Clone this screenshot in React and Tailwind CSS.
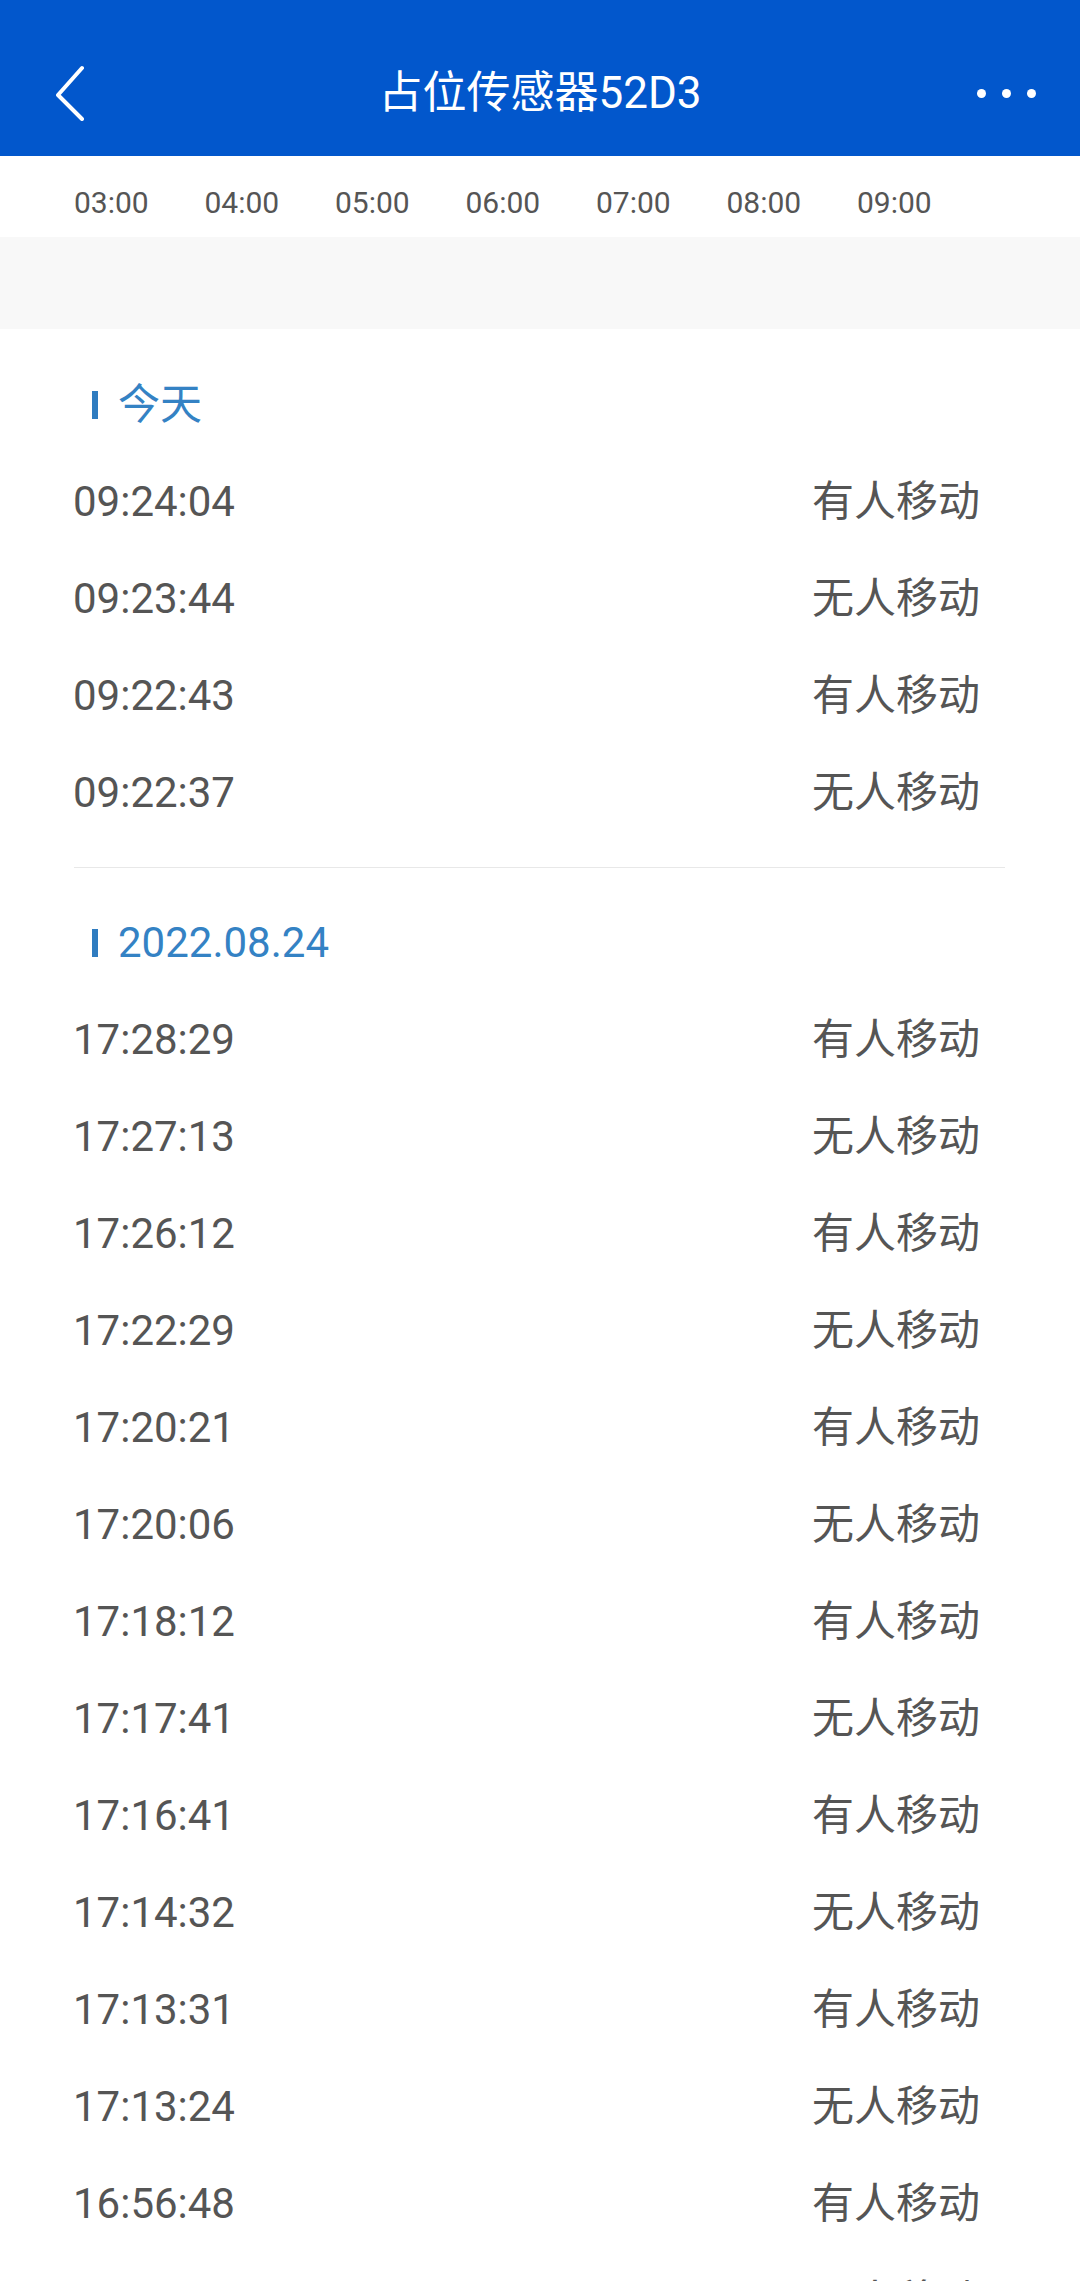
import React from 'react';

const hours = ['03:00', '04:00', '05:00', '06:00', '07:00', '08:00', '09:00'];

const today = [
  ['09:24:04', '有人移动'],
  ['09:23:44', '无人移动'],
  ['09:22:43', '有人移动'],
  ['09:22:37', '无人移动'],
];

const earlier = [
  ['17:28:29', '有人移动'],
  ['17:27:13', '无人移动'],
  ['17:26:12', '有人移动'],
  ['17:22:29', '无人移动'],
  ['17:20:21', '有人移动'],
  ['17:20:06', '无人移动'],
  ['17:18:12', '有人移动'],
  ['17:17:41', '无人移动'],
  ['17:16:41', '有人移动'],
  ['17:14:32', '无人移动'],
  ['17:13:31', '有人移动'],
  ['17:13:24', '无人移动'],
  ['16:56:48', '有人移动'],
  ['16:55:02', '无人移动'],
];

const font = { fontFamily: 'Roboto, "Noto Sans CJK SC", sans-serif' };

function SectionTitle({ children }) {
  return (
    <div className="h-[96px] flex items-center pl-[92px]">
      <span className="w-[6px] h-[28px] bg-[#2f7cc0]" />
      <span className="ml-[20px] text-[42px] leading-none text-[#3482c4]">{children}</span>
    </div>
  );
}

function Row({ time, state }) {
  return (
    <div className="h-[97px] flex items-center justify-between pl-[73px] pr-[100px]">
      <span className="text-[42px] leading-none text-[#555]">{time}</span>
      <span className="text-[42px] leading-none text-[#555]">{state}</span>
    </div>
  );
}

export default function App() {
  return (
    <div className="w-[1080px] h-[2281px] overflow-hidden bg-white" style={font}>
      {/* top bar */}
      <div className="h-[156px] bg-[#0257cc] flex items-center justify-between pt-[30px] px-[50px] relative">
        <svg width="36" height="56" viewBox="0 0 36 56" className="ml-[2px]">
          <polyline points="30,3 6,30 30,54" fill="none" stroke="#fff" strokeWidth="4" strokeLinecap="round" strokeLinejoin="round" />
        </svg>
        <h1 className="absolute left-0 right-0 top-[30px] bottom-0 flex items-center justify-center text-white text-[44px] leading-none font-normal pointer-events-none">
          占位传感器52D3
        </h1>
        <div className="flex gap-[16px] mr-[-6px]">
          <span className="w-[9px] h-[9px] rounded-full bg-white" />
          <span className="w-[9px] h-[9px] rounded-full bg-white" />
          <span className="w-[9px] h-[9px] rounded-full bg-white" />
        </div>
      </div>

      {/* hours */}
      <div className="h-[81px] flex items-center pl-[74px] pt-[12px]">
        {hours.map((h) => (
          <span key={h} className="w-[130.5px] shrink-0 text-[30px] leading-none text-[#555]">{h}</span>
        ))}
      </div>
      <div className="h-[92px] bg-[#f8f8f8]" />

      {/* records */}
      <div className="pt-[28px]">
        <SectionTitle>今天</SectionTitle>
        {today.map(([t, s]) => <Row key={t} time={t} state={s} />)}
        <div className="mt-[26px] mb-[27px] ml-[74px] mr-[75px] h-px bg-[#e8e8e8]" />
        <SectionTitle>2022.08.24</SectionTitle>
        {earlier.map(([t, s]) => <Row key={t} time={t} state={s} />)}
      </div>
    </div>
  );
}
